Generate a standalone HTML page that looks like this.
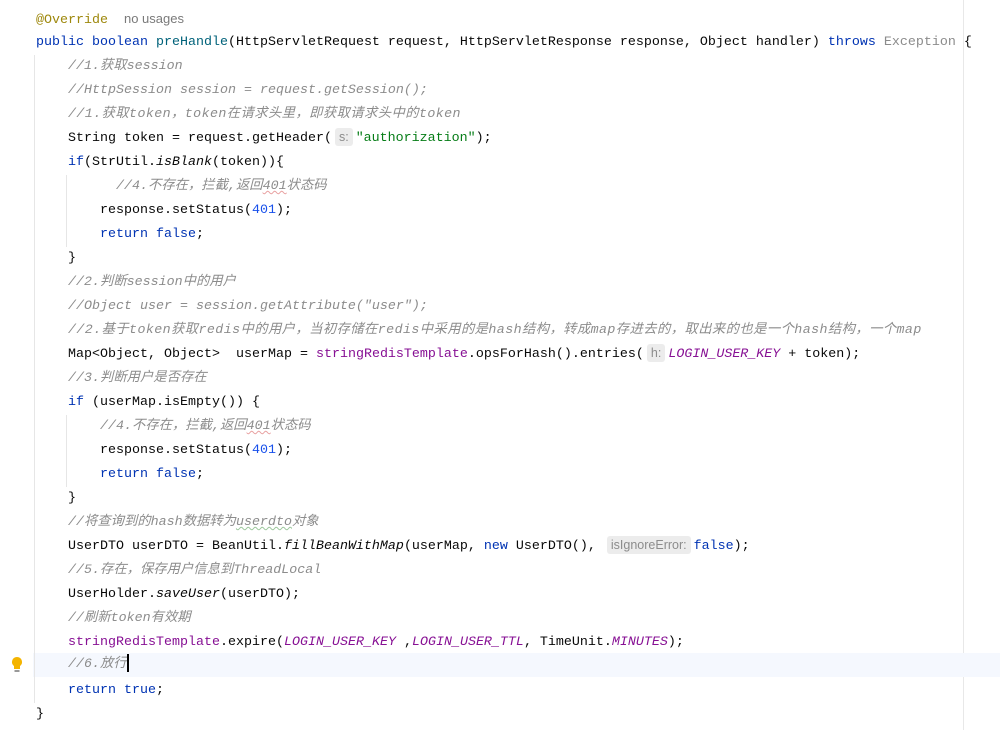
<!DOCTYPE html>
<html><head><meta charset="utf-8"><style>
html,body{margin:0;padding:0;background:#fff;}
body{width:1000px;height:730px;position:relative;overflow:hidden;font-family:"Liberation Mono","Noto Sans CJK SC",monospace;font-size:13.33px;color:#080808;}
.l{position:absolute;height:24px;line-height:24px;white-space:pre;margin-top:2px}
.k{color:#0033b3}.m{color:#00627a}.c{color:#8c8c8c;font-style:italic}.s{color:#067d17}.n{color:#1750eb}
.f{color:#871094;font-style:italic}.a{color:#9e880d}.i{font-style:italic}
.h{display:inline-block;background:#ececec;color:#8c8c8c;font-family:"Liberation Sans",sans-serif;font-size:12.5px;line-height:18px;padding:0 4px;border-radius:3px;margin:0 3px;}
.u{text-decoration:underline wavy #e8a0a0;text-decoration-thickness:1px}
.ug{text-decoration:underline wavy #9bc79b;text-decoration-thickness:1px}
.g{position:absolute;width:1px;background:#e6e6e6}
.w{letter-spacing:0.4px}
</style></head><body>
<div style="position:absolute;left:963px;top:0;width:1px;height:730px;background:#e8e8e8"></div>
<div style="position:absolute;left:33px;top:653px;width:967px;height:24px;background:#f5f8fe"></div>
<div class="g" style="left:34px;top:55px;height:648px"></div>
<div class="g" style="left:66px;top:175px;height:72px"></div>
<div class="g" style="left:66px;top:415px;height:72px"></div>
<svg style="position:absolute;left:10px;top:656px" width="14" height="18" viewBox="0 0 14 18"><path d="M7 1a5 5 0 0 0-3 9v3h6v-3a5 5 0 0 0-3-9z" fill="#f4b400"/><rect x="4.5" y="14" width="5" height="2" fill="#999"/></svg>
<div class="l" style="top:5px;left:36px"><span class="a">@Override</span>  <span style="font-family:'Liberation Sans',sans-serif;color:#7a7a7a;font-size:13px">no usages</span></div>
<div class="l" style="top:29px;left:36px"><span class="k">public boolean </span><span class="m">preHandle</span>(HttpServletRequest request, HttpServletResponse response, Object handler) <span class="k">throws </span><span style="color:#8c8c8c">Exception</span> {</div>
<div class="l c" style="top:53px;left:68px">//1.获取session</div>
<div class="l c" style="top:77px;left:68px">//HttpSession session = request.getSession();</div>
<div class="l c w" style="top:101px;left:68px">//1.获取token，token在请求头里，即获取请求头中的token</div>
<div class="l" style="top:125px;left:68px">String token = request.getHeader(<span class="h">s:</span><span class="s">"authorization"</span>);</div>
<div class="l" style="top:149px;left:68px"><span class="k">if</span>(StrUtil.<span class="i">isBlank</span>(token)){</div>
<div class="l c" style="top:173px;left:116px">//4.不存在，拦截,返回<span class="u">401</span>状态码</div>
<div class="l" style="top:197px;left:100px">response.setStatus(<span class="n">401</span>);</div>
<div class="l" style="top:221px;left:100px"><span class="k">return false</span>;</div>
<div class="l" style="top:245px;left:68px">}</div>
<div class="l c" style="top:269px;left:68px">//2.判断session中的用户</div>
<div class="l c" style="top:293px;left:68px">//Object user = session.getAttribute("user");</div>
<div class="l c w" style="top:317px;left:68px">//2.基于token获取redis中的用户，当初存储在redis中采用的是hash结构，转成map存进去的，取出来的也是一个hash结构，一个map</div>
<div class="l" style="top:341px;left:68px">Map&lt;Object, Object&gt;  userMap = <span class="f" style="font-style:normal">stringRedisTemplate</span>.opsForHash().entries(<span class="h">h:</span><span class="f">LOGIN_USER_KEY</span> + token);</div>
<div class="l c" style="top:365px;left:68px">//3.判断用户是否存在</div>
<div class="l" style="top:389px;left:68px"><span class="k">if</span> (userMap.isEmpty()) {</div>
<div class="l c" style="top:413px;left:100px">//4.不存在，拦截,返回<span class="u">401</span>状态码</div>
<div class="l" style="top:437px;left:100px">response.setStatus(<span class="n">401</span>);</div>
<div class="l" style="top:461px;left:100px"><span class="k">return false</span>;</div>
<div class="l" style="top:485px;left:68px">}</div>
<div class="l c" style="top:509px;left:68px">//将查询到的hash数据转为<span class="ug">userdto</span>对象</div>
<div class="l" style="top:533px;left:68px">UserDTO userDTO = BeanUtil.<span class="i">fillBeanWithMap</span>(userMap, <span class="k">new</span> UserDTO(), <span class="h">isIgnoreError:</span><span class="k">false</span>);</div>
<div class="l c" style="top:557px;left:68px">//5.存在，保存用户信息到ThreadLocal</div>
<div class="l" style="top:581px;left:68px">UserHolder.<span class="i">saveUser</span>(userDTO);</div>
<div class="l c" style="top:605px;left:68px">//刷新token有效期</div>
<div class="l" style="top:629px;left:68px"><span class="f" style="font-style:normal">stringRedisTemplate</span>.expire(<span class="f">LOGIN_USER_KEY</span> ,<span class="f">LOGIN_USER_TTL</span>, TimeUnit.<span class="f">MINUTES</span>);</div>
<div class="l c" style="top:651px;left:68px">//6.放行<span style="display:inline-block;width:2px;height:18px;background:#000;vertical-align:middle"></span></div>
<div class="l" style="top:677px;left:68px"><span class="k">return true</span>;</div>
<div class="l" style="top:701px;left:36px">}</div>
</body></html>
